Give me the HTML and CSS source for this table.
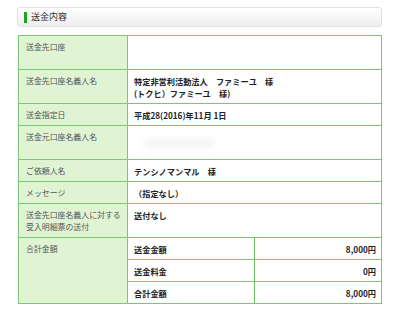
FILE: index.html
```html
<!DOCTYPE html>
<html lang="ja">
<head>
<meta charset="utf-8">
<link rel="stylesheet" href="styles.css">
</head>
<body>
<div class="wrap">
  <div class="head"><span class="bar"></span><span class="title">送金内容</span></div>
  <table class="detail">
    <tr><th>送金先口座</th><td><div class="blank"></div></td></tr>
    <tr><th>送金先口座名義人名</th><td>特定非営利活動法人　ファミーユ　様<br>(トクヒ）ファミーユ　様)</td></tr>
    <tr><th>送金指定日</th><td>平成28(2016)年11月 1日</td></tr>
    <tr><th>送金元口座名義人名</th><td><div class="blank"><span class="blur"></span></div></td></tr>
    <tr><th>ご依頼人名</th><td>テンシノマンマル　様</td></tr>
    <tr><th>メッセージ</th><td>（指定なし）</td></tr>
    <tr><th>送金先口座名義人に対する<br>受入明細票の送付</th><td>送付なし</td></tr>
    <tr><th>合計金額</th><td class="nest">
      <table class="sum">
        <tr><td>送金金額</td><td class="num">8,000円</td></tr>
        <tr><td>送金料金</td><td class="num">0円</td></tr>
        <tr><td>合計金額</td><td class="num">8,000円</td></tr>
      </table>
    </td></tr>
  </table>
</div>
</body>
</html>
```
FILE: styles.css
```css
html, body {
  margin: 0;
  padding: 0;
  background: #fff;
}
body {
  font-family: "Noto Sans CJK JP", "Noto Sans", sans-serif;
}
.wrap {
  padding: 7px 0 0 17px;
  width: 365px;
}
.head {
  box-sizing: border-box;
  height: 20px;
  border: 1px solid #e2e2e2;
  border-radius: 3px;
  background: linear-gradient(#ffffff, #eeeeee);
  display: flex;
  align-items: center;
  padding-left: 6px;
}
.bar {
  width: 3px;
  height: 11px;
  background: #21a321;
  margin-right: 4px;
}
.title {
  font-size: 9px;
  color: #333;
  line-height: 12px;
}
.detail {
  margin: 8px 0 0 1px;
  width: 364px;
  border-collapse: collapse;
  border: 1px solid #74c26d;
  table-layout: fixed;
}
.detail th, .detail td {
  border: 1px solid #7cc775;
  padding: 5px 4px 4px 6px;
  line-height: 12px;
  height: 12px;
  font-size: 8.2px;
  vertical-align: top;
  text-align: left;
  overflow: hidden;
}
.detail th {
  width: 101px;
  padding-right: 0;
  padding-left: 7px;
  font-size: 7.9px;
  font-weight: normal;
  color: #555;
  background: #e0f4d3;
  white-space: nowrap;
}
.detail td {
  font-weight: bold;
  color: #222;
}
.blank {
  height: 24px;
  position: relative;
}
.blur {
  position: absolute;
  left: 10px;
  top: 8px;
  width: 70px;
  height: 8px;
  background: #f3f3f3;
  filter: blur(3px);
}
.detail td.nest {
  padding: 0;
}
.sum {
  width: 100%;
  border-collapse: collapse;
  table-layout: fixed;
}
.sum td {
  border: none;
  border-bottom: 1px solid #7cc775;
  padding: 5px 6px 4px 6px;
  line-height: 12px;
  height: 12px;
  font-size: 8.2px;
  font-weight: bold;
  color: #222;
}
.sum tr:last-child td {
  border-bottom: none;
}
.sum td.num {
  border-left: 1px solid #6fbf68;
  text-align: right;
  padding-right: 5px;
}
```
